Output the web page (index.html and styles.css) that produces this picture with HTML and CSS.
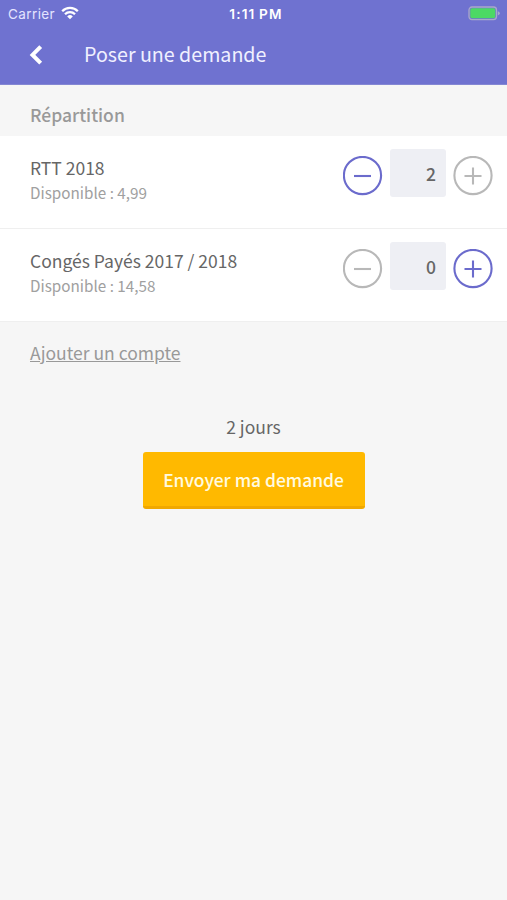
FILE: index.html
```html
<!DOCTYPE html>
<html lang="fr">
<head>
<meta charset="utf-8">
<title>Poser une demande</title>
<link rel="stylesheet" href="styles.css">
</head>
<body>
<header class="header">
  <div class="status">
    <div class="status-left"><span class="carrier">Carrier</span>
      <svg class="wifi" width="18" height="14" viewBox="0 0 18 14" fill="none" stroke="#fff" stroke-width="2.3"><path d="M1.2 5.2a11 11 0 0 1 15.6 0M4 8.2a7 7 0 0 1 10 0"/><path d="M9 13.2 6.2 10.4a4 4 0 0 1 5.6 0z" fill="#fff" stroke="none"/></svg>
    </div>
    <span class="time">1:11 PM</span>
    <svg class="battery" width="33" height="15" viewBox="0 0 33 15"><rect x="1" y="1" width="27.5" height="12.6" rx="3" fill="none" stroke="#a9a9c9" stroke-width="1.3"/><rect x="2.3" y="2.3" width="25" height="10" rx="1.8" fill="#4cd964"/><path d="M29.8 5.2q2 .6 2 2.1t-2 2.1z" fill="#a9a9c9"/></svg>
  </div>
  <div class="nav">
    <svg class="back" width="14" height="20" viewBox="0 0 14 20" fill="none" stroke="#fff" stroke-width="4"><path d="M11.7 1.6 3.5 9.9l8.2 8.3"/></svg>
    <h1 class="title">Poser une demande</h1>
  </div>
</header>
<main>
  <h2 class="section">Répartition</h2>
  <div class="row">
    <div class="info"><div class="name"><span>RTT 2018</span></div><div class="available">Disponible : 4,99</div></div>
    <div class="stepper">
      <svg class="round active" viewBox="0 0 40 40"><circle cx="19.5" cy="19.5" r="18.6"/><path d="M11 20h17"/></svg>
      <div class="value">2</div>
      <svg class="round" viewBox="0 0 40 40"><circle cx="20" cy="19.5" r="18.6"/><path d="M11.5 20h17M20 11.5v17"/></svg>
    </div>
  </div>
  <div class="row">
    <div class="info"><div class="name"><span>Congés Payés 2017 / 2018</span></div><div class="available">Disponible : 14,58</div></div>
    <div class="stepper">
      <svg class="round" viewBox="0 0 40 40"><circle cx="19.5" cy="19.5" r="18.6"/><path d="M11 20h17"/></svg>
      <div class="value">0</div>
      <svg class="round active" viewBox="0 0 40 40"><circle cx="20" cy="19.5" r="18.6"/><path d="M11.5 20h17M20 11.5v17"/></svg>
    </div>
  </div>
  <a class="add">Ajouter un compte</a>
  <div class="total">2 jours</div>
  <button class="submit">Envoyer ma demande</button>
</main>
</body>
</html>
```

FILE: styles.css
```css
* { box-sizing: border-box; }
body {
  margin: 0;
  min-height: 900px;
  background: #f6f6f6;
  color: #666;
  font-family: "Noto Sans CJK SC", sans-serif;
}
.header {
  height: 85px;
  background: #6f72d0;
  border-bottom: 1px solid #8487d3;
  color: #fff;
}
.status {
  display: grid;
  grid-template-columns: 1fr auto 1fr;
  align-items: center;
  height: 27px;
  padding: 0 6px 0 8px;
  font-family: Inter, sans-serif;
}
.status-left { display: flex; align-items: center; gap: 6px; }
.carrier { padding-top: 1px; font-size: 13.5px; line-height: 26px; letter-spacing: 0.4px; color: #e4e4ff; }
.wifi { margin-top: -1px; }
.time { margin-left: 3px; padding-top: 1px; font-size: 13.6px; font-weight: 600; line-height: 26px; letter-spacing: 1.15px; word-spacing: -1px; }
.battery { justify-self: end; }
.nav { display: flex; align-items: center; height: 55px; padding-left: 29px; }
.title { margin: -2px 0 0 41px; font-size: 19.65px; font-weight: 400; line-height: 30px; color: #f0f0ff; }
.section {
  height: 51px;
  margin: 0;
  padding: 15px 30px 0;
  font-size: 17.5px;
  font-weight: 500;
  line-height: 30px;
  color: #999;
}
.row {
  display: flex;
  justify-content: space-between;
  height: 93px;
  padding: 13px 14px 0 30px;
  background: #fff;
  border-bottom: 1px solid #efefef;
}
.info { padding-top: 6px; }
.name { font-size: 17.5px; line-height: 26px; }
.available { font-size: 15.25px; line-height: 22px; color: #a0a0a0; }
.stepper { display: flex; align-items: flex-start; gap: 7px; }
.round {
  width: 40px;
  height: 40px;
  margin-top: 7px;
  fill: none;
  stroke: #b8b8b8;
  stroke-width: 2.1;
}
.active { stroke: #6b6bcc; }
.value {
  width: 56px;
  height: 48px;
  padding-right: 10px;
  border-radius: 3px;
  background: #eeeff4;
  font-size: 17.5px;
  font-weight: 500;
  line-height: 49px;
  text-align: right;
}
.add {
  display: block;
  width: max-content;
  margin: 16px 0 0 30px;
  font-size: 17.5px;
  line-height: 30px;
  color: #999;
  text-decoration: underline;
}
.total { margin-top: 45px; font-size: 17.5px; line-height: 28px; text-align: center; }
.submit {
  display: block;
  width: 222px;
  height: 57px;
  margin: 11px auto 0;
  padding: 1px 0 0;
  border: 0;
  border-bottom: 3px solid #f0a800;
  border-radius: 3px;
  background: #ffb900;
  color: #fffbe0;
  font-family: inherit;
  font-size: 17.4px;
  font-weight: 500;
  line-height: 53px;
}
```
